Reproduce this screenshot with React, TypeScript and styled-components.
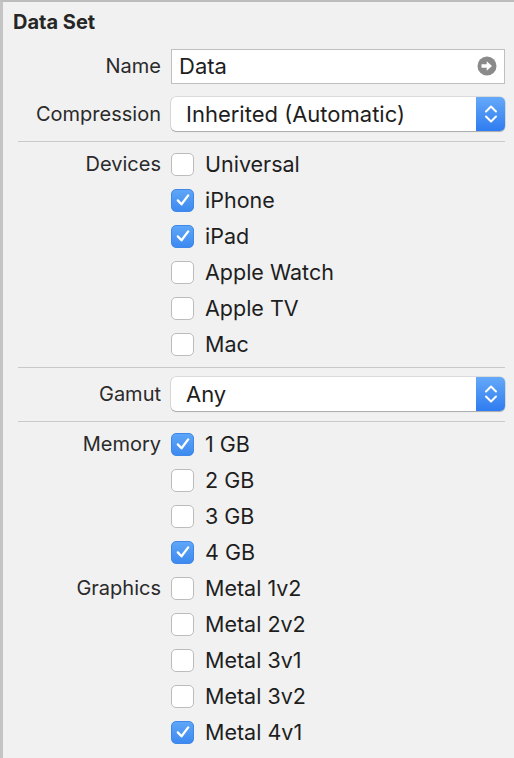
import React from 'react'
import styled, { createGlobalStyle } from 'styled-components'

const GlobalStyle = createGlobalStyle`
  html, body {
    margin: 0;
    padding: 0;
    background: #f1f1f1;
  }
  body {
    font-family: Inter, "Noto Sans", sans-serif;
    -webkit-font-smoothing: antialiased;
  }
`

const Panel = styled.div`
  width: 514px;
  height: 758px;
  box-sizing: border-box;
  background: #f1f1f1;
  border-top: 2px solid #bcbcbc;
  border-left: 3px solid #c4c4c4;
  padding: 0 9px 0 0;
  overflow: hidden;
`

const Title = styled.h2`
  margin: 0;
  box-sizing: border-box;
  padding: 8px 0 0 10px;
  height: 30px;
  font-size: 20px;
  line-height: 24px;
  font-weight: 700;
  color: #262626;
`

const Form = styled.div`
  display: grid;
  grid-template-columns: 158px 1fr;
  column-gap: 10px;
`

const Label = styled.div`
  grid-column: 1;
  text-align: right;
  font-size: 20px;
  color: #2a2a2a;
  line-height: 36px;
`

const Control = styled.div`
  grid-column: 2;
  display: flex;
  align-items: center;
  min-height: 36px;
`

const Separator = styled.div`
  grid-column: 1 / -1;
  height: 1px;
  margin-left: 15px;
  background: #c9c9c9;
`

const Spacer = styled.div<{ $h: number }>`
  grid-column: 1 / -1;
  height: ${(p) => p.$h}px;
`

const TextField = styled.div`
  flex: 1;
  height: 35px;
  box-sizing: border-box;
  background: #fff;
  border: 1px solid #bfbfbf;
  display: flex;
  align-items: center;
  padding: 0 7px 0 7px;
  font-size: 22px;
  color: #1e1e1e;
`

const FieldText = styled.span`
  flex: 1;
`

const Popup = styled.div`
  flex: 1;
  height: 34px;
  box-sizing: border-box;
  background: #fff;
  border-radius: 5px;
  box-shadow: 0 0 0 0.5px rgba(0, 0, 0, 0.18), 0 1px 1px rgba(0, 0, 0, 0.22);
  display: flex;
  align-items: center;
  overflow: hidden;
  font-size: 22px;
  color: #1e1e1e;
`

const PopupText = styled.span`
  flex: 1;
  padding-left: 15px;
`

const Stepper = styled.div`
  width: 29px;
  align-self: stretch;
  background: linear-gradient(#65a9f9, #2f7cf0);
  display: flex;
  align-items: center;
  justify-content: center;
`

const CheckRow = styled.label`
  display: flex;
  align-items: center;
  gap: 11px;
  font-size: 21.5px;
  color: #1e1e1e;
  height: 36px;
`

const Box = styled.span<{ $on: boolean }>`
  width: 23px;
  height: 23px;
  box-sizing: border-box;
  border-radius: 5px;
  display: flex;
  align-items: center;
  justify-content: center;
  background: ${(p) => (p.$on ? 'linear-gradient(#5ea6f7, #3d8af0)' : '#fff')};
  border: ${(p) => (p.$on ? '1px solid #3f87e8' : '1px solid #bcbcbc')};
`

const ArrowIcon = () => (
  <svg width="20" height="20" viewBox="0 0 20 20">
    <circle cx="10" cy="10" r="9.5" fill="#8a8a8a" />
    <path d="M4.5 8.2h5.2V5.2L15 10l-5.3 4.8v-3H4.5z" fill="#fff" />
  </svg>
)

const Chevrons = () => (
  <svg width="16" height="24" viewBox="0 0 16 24">
    <path d="M3 9.5L8 4.5l5 5M3 14.5l5 5 5-5" fill="none" stroke="#fff" strokeWidth="2" strokeLinecap="round" strokeLinejoin="round" />
  </svg>
)

const Tick = () => (
  <svg width="16" height="14" viewBox="0 0 16 14">
    <path d="M2.8 7.4l3.7 3.9L13.2 2.4" fill="none" stroke="#fff" strokeWidth="2.3" strokeLinecap="round" strokeLinejoin="round" />
  </svg>
)

function Check({ label, on }: { label: string; on: boolean }) {
  return (
    <CheckRow>
      <Box $on={on}>{on && <Tick />}</Box>
      {label}
    </CheckRow>
  )
}

interface IGroup {
  title: string
  items: [string, boolean][]
}

function Group({ group }: { group: IGroup }) {
  return (
    <>
      {group.items.map(([name, on], i) => (
        <React.Fragment key={name}>
          <Label>{i === 0 ? group.title : ''}</Label>
          <Control>
            <Check label={name} on={on} />
          </Control>
        </React.Fragment>
      ))}
    </>
  )
}

const devices: IGroup = {
  title: 'Devices',
  items: [
    ['Universal', false],
    ['iPhone', true],
    ['iPad', true],
    ['Apple Watch', false],
    ['Apple TV', false],
    ['Mac', false],
  ],
}

const memory: IGroup = {
  title: 'Memory',
  items: [
    ['1 GB', true],
    ['2 GB', false],
    ['3 GB', false],
    ['4 GB', true],
  ],
}

const graphics: IGroup = {
  title: 'Graphics',
  items: [
    ['Metal 1v2', false],
    ['Metal 2v2', false],
    ['Metal 3v1', false],
    ['Metal 3v2', false],
    ['Metal 4v1', true],
  ],
}

export default function App() {
  return (
    <Panel>
      <GlobalStyle />
      <Title>Data Set</Title>
      <Form>
        <Spacer $h={16} />
        <Label>Name</Label>
        <Control>
          <TextField>
            <FieldText>Data</FieldText>
            <ArrowIcon />
          </TextField>
        </Control>
        <Spacer $h={12} />
        <Label>Compression</Label>
        <Control>
          <Popup>
            <PopupText>Inherited (Automatic)</PopupText>
            <Stepper>
              <Chevrons />
            </Stepper>
          </Popup>
        </Control>
        <Spacer $h={9} />
        <Separator />
        <Spacer $h={4} />
        <Group group={devices} />
        <Spacer $h={5} />
        <Separator />
        <Spacer $h={8} />
        <Label>Gamut</Label>
        <Control>
          <Popup>
            <PopupText>Any</PopupText>
            <Stepper>
              <Chevrons />
            </Stepper>
          </Popup>
        </Control>
        <Spacer $h={9} />
        <Separator />
        <Spacer $h={4} />
        <Group group={memory} />
        <Group group={graphics} />
      </Form>
    </Panel>
  )
}
